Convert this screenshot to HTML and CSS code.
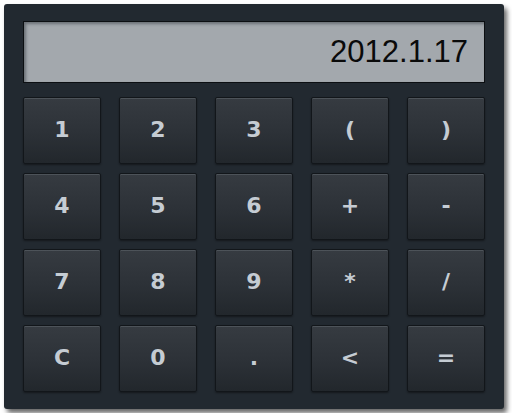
FILE: index.html
```html
<!DOCTYPE html>
<html>
<head>
<meta charset="utf-8">
<link rel="stylesheet" href="styles.css">
</head>
<body>
<div class="calc">
  <div class="display">2012.1.17</div>
  <div class="keys">
    <div class="key">1</div><div class="key">2</div><div class="key">3</div><div class="key">(</div><div class="key">)</div>
    <div class="key">4</div><div class="key">5</div><div class="key">6</div><div class="key">+</div><div class="key">-</div>
    <div class="key">7</div><div class="key">8</div><div class="key">9</div><div class="key">*</div><div class="key">/</div>
    <div class="key">C</div><div class="key">0</div><div class="key">.</div><div class="key">&lt;</div><div class="key">=</div>
  </div>
</div>
</body>
</html>
```
FILE: styles.css
```css
html, body {
  margin: 0;
  padding: 0;
  background: #ffffff;
}
body {
  padding: 4px;
}
.calc {
  width: 462px;
  height: 371px;
  padding: 17px 19px;
  background: #222930;
  border-radius: 3px;
  box-shadow: 3px 4px 5px rgba(0, 0, 0, 0.6);
}
.display {
  box-sizing: border-box;
  height: 62px;
  border: 1px solid #0c0f12;
  background: #a3a8ad;
  box-shadow: inset 2px 2px 3px rgba(60, 66, 72, 0.55);
  color: #0a0a0a;
  font-family: "Liberation Sans", Arial, sans-serif;
  font-size: 31px;
  line-height: 60px;
  text-align: right;
  padding-right: 16px;
}
.keys {
  margin-top: 14px;
  display: grid;
  grid-template-columns: repeat(5, 78px);
  grid-template-rows: repeat(4, 67px);
  column-gap: 18px;
  row-gap: 9px;
}
.key {
  box-sizing: border-box;
  border: 1px solid #12161a;
  border-radius: 2px;
  background: linear-gradient(#363b41, #2c3137 55%, #22272c);
  box-shadow: inset 0 1px 0 rgba(120, 128, 136, 0.35), 0 1px 2px rgba(0, 0, 0, 0.4);
  color: #c5ccd3;
  font-family: "DejaVu Sans", Verdana, sans-serif;
  font-weight: bold;
  font-size: 22px;
  display: flex;
  align-items: center;
  justify-content: center;
  padding-bottom: 2px;
}
```
